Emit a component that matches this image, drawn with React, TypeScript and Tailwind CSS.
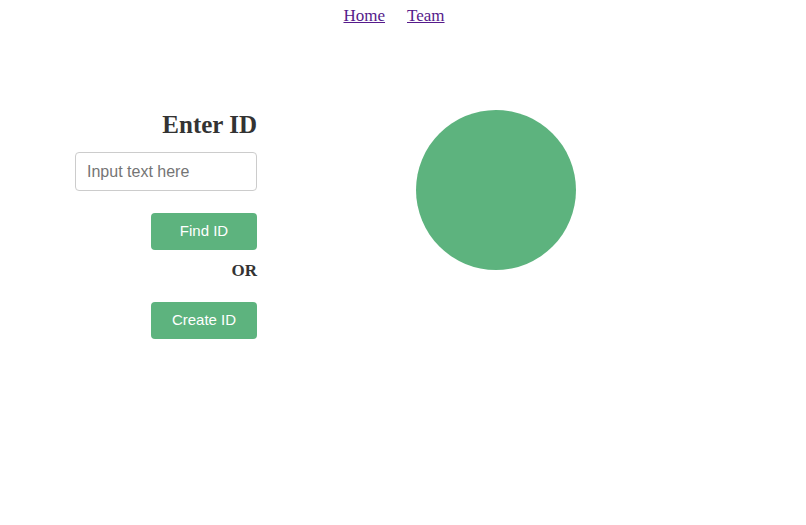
import React from "react";

export default function App() {
  return (
    <div className="w-[806px] h-[525px] bg-white relative">
      <nav className="flex justify-center gap-[22px] pt-[5px] pr-[18px] text-[17px] leading-[22px] font-['Liberation_Serif',serif]">
        <a href="#" className="underline text-[#551a8b]">Home</a>
        <a href="#" className="underline text-[#551a8b]">Team</a>
      </nav>
      <div className="flex mt-[83px]">
        <div className="w-[257px] flex flex-col items-end">
          <h1 className="font-['Liberation_Serif',serif] font-bold text-[25px] leading-[30px] text-[#333]">Enter ID</h1>
          <input
            type="text"
            placeholder="Input text here"
            className="mt-[12px] w-[182px] h-[39px] border border-[#ccc] rounded-[4px] px-[11px] text-[16px] font-['Liberation_Sans',sans-serif] placeholder:text-[#757575] outline-none"
          />
          <button className="mt-[22px] w-[106px] h-[37px] bg-[#5db37e] rounded-[4px] text-white text-[15px] font-['Liberation_Sans',sans-serif]">
            Find ID
          </button>
          <div className="mt-[10px] font-['Liberation_Serif',serif] font-bold text-[17px] leading-[22px] text-[#333]">OR</div>
          <button className="mt-[20px] w-[106px] h-[37px] bg-[#5db37e] rounded-[4px] text-white text-[15px] font-['Liberation_Sans',sans-serif]">
            Create ID
          </button>
        </div>
        <div className="ml-[159px] mt-[0px] w-[160px] h-[160px] rounded-full bg-[#5db37e]" />
      </div>
    </div>
  );
}
